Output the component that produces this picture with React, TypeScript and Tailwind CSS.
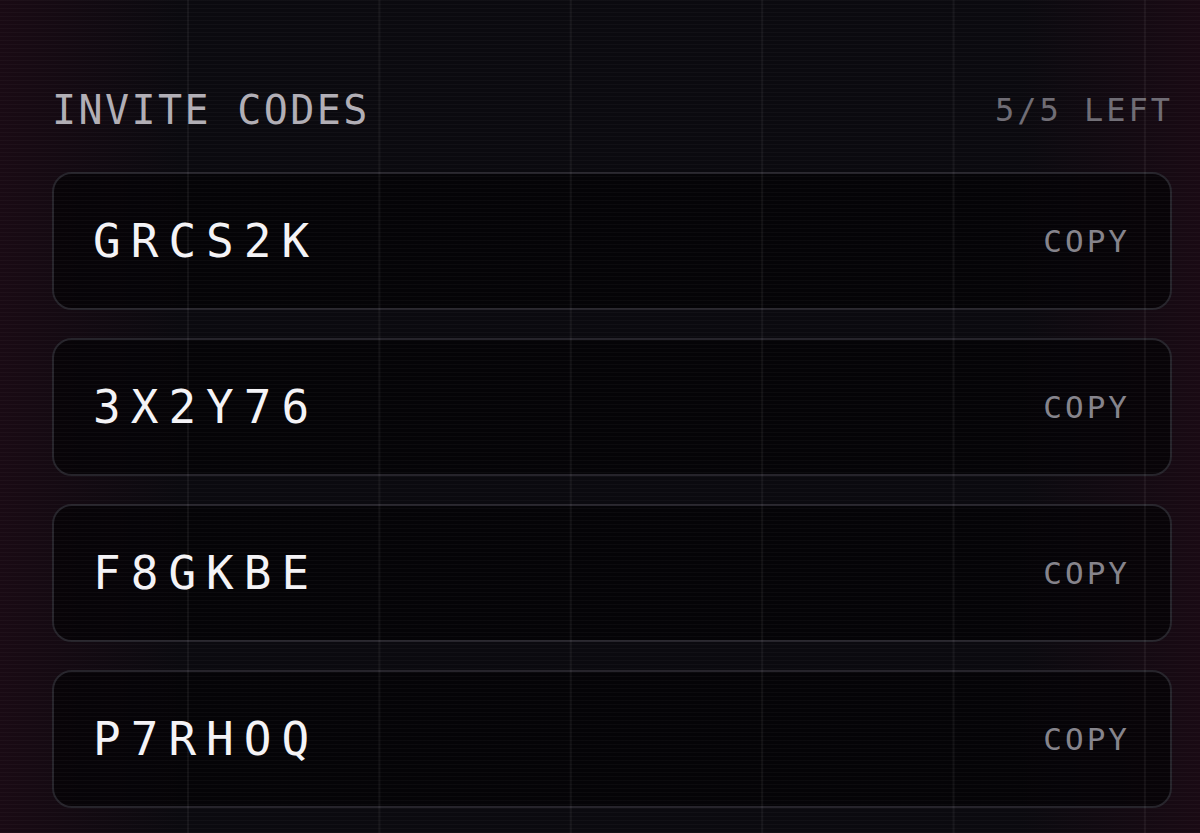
import React, { useState } from "react";

type InviteCode = {
  code: string;
  used: boolean;
};

const codes: InviteCode[] = [
  { code: "GRCS2K", used: false },
  { code: "3X2Y76", used: false },
  { code: "F8GKBE", used: false },
  { code: "P7RHOQ", used: false },
];

const mono = "font-['DejaVu_Sans_Mono','Liberation_Mono',monospace]";

const CodeRow: React.FC<{ item: InviteCode }> = ({ item }) => {
  const [copied, setCopied] = useState(false);

  const handleCopy = () => {
    navigator.clipboard?.writeText(item.code).catch(() => {});
    setCopied(true);
    setTimeout(() => setCopied(false), 1500);
  };

  return (
    <div className="flex h-[138px] items-center justify-between rounded-[20px] border-2 border-[#26242b] bg-[#040306]/75 pl-[39px] pr-[40px]">
      <span className={`${mono} text-[46px] leading-none tracking-[10px] text-[#f4f3f6]`}>
        {item.code}
      </span>
      <button
        type="button"
        onClick={handleCopy}
        className={`${mono} text-[31px] leading-none tracking-[3px] text-[#85838b]`}
      >
        {copied ? "DONE" : "COPY"}
      </button>
    </div>
  );
};

export default function App() {
  const left = codes.filter((c) => !c.used).length + 1;

  return (
    <div className="relative min-h-[833px] w-full overflow-hidden bg-[#0b0a0f]">
      {/* edge tint */}
      <div className="pointer-events-none absolute inset-0 bg-[linear-gradient(90deg,rgba(26,10,20,0.95)_0%,rgba(26,10,20,0)_15%,rgba(26,10,20,0)_85%,rgba(26,10,20,0.95)_100%)]" />
      {/* vertical grid */}
      <div className="pointer-events-none absolute inset-0 z-10 bg-[linear-gradient(90deg,rgba(255,255,255,0.05)_0px,rgba(255,255,255,0.05)_2px,transparent_2px)] bg-[length:191.4px_100%] bg-[position:187px_0]" />
      {/* scanlines */}
      <div className="pointer-events-none absolute inset-0 z-10 bg-[repeating-linear-gradient(180deg,rgba(255,255,255,0.028)_0px,rgba(255,255,255,0.028)_1px,transparent_1px,transparent_4px)]" />

      <div className="relative pl-[52px] pr-[28px] pt-[90px]">
        <div className="flex items-center justify-between">
          <h2 className={`${mono} text-[40px] leading-none tracking-[2.4px] text-[#b1aeb5]`}>
            INVITE CODES
          </h2>
          <span className={`${mono} -mr-[1px] text-[32px] leading-none tracking-[3px] text-[#6f6c74]`}>
            {left}/{left} LEFT
          </span>
        </div>

        <div className="mt-[42px] flex flex-col gap-[28px]">
          {codes.map((item) => (
            <CodeRow key={item.code} item={item} />
          ))}
        </div>
      </div>
    </div>
  );
}
